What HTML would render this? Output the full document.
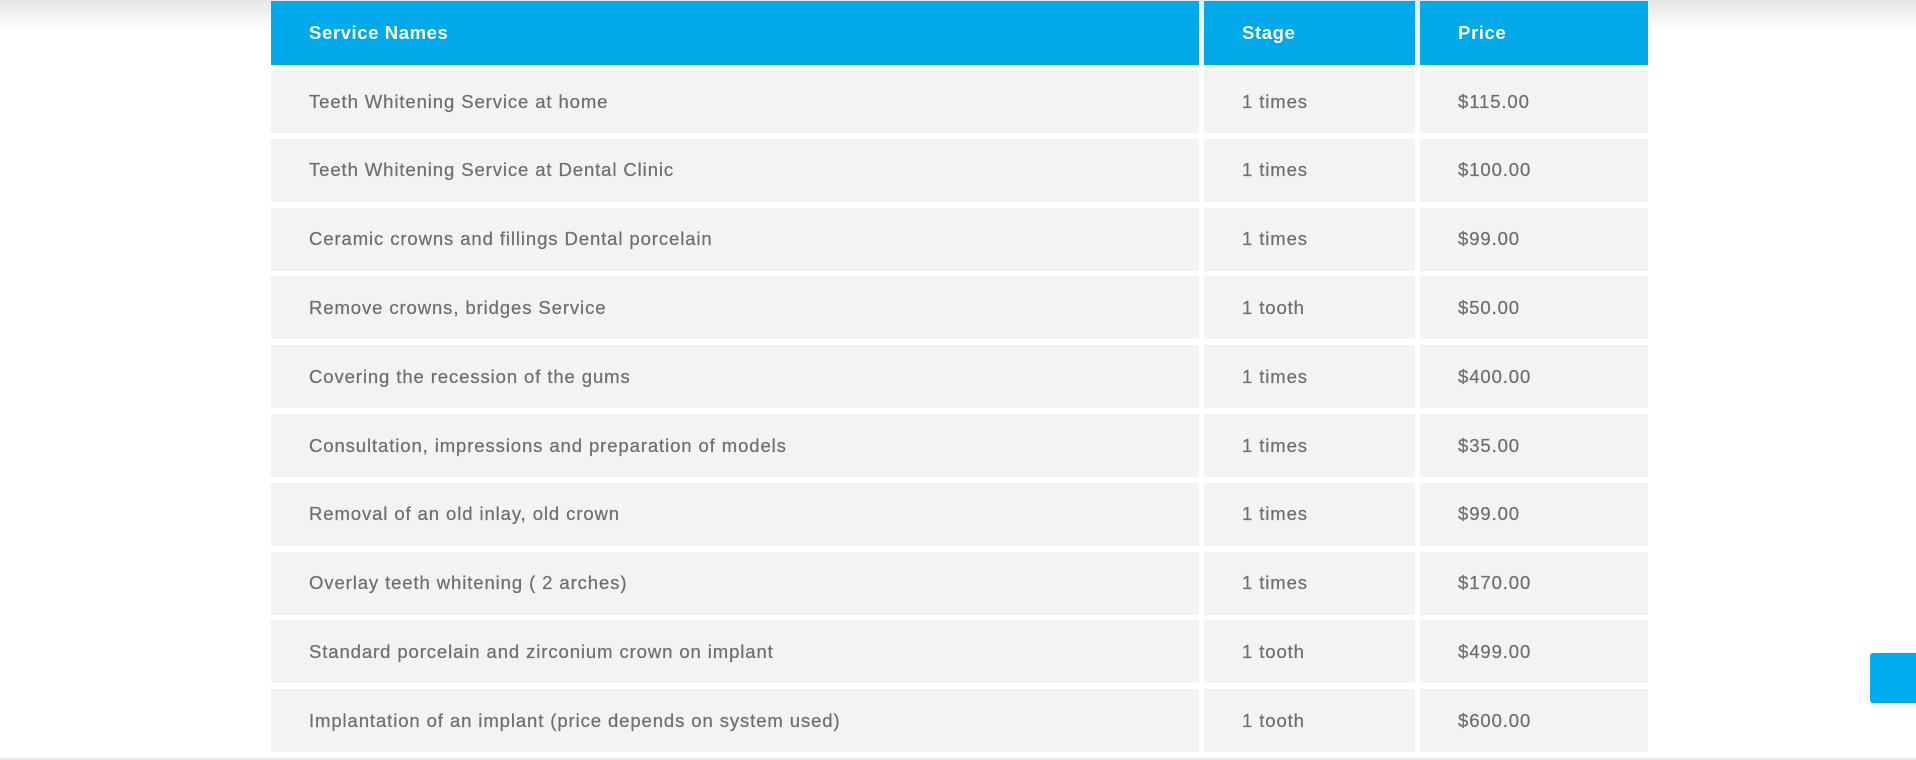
<!DOCTYPE html>
<html><head><style>
body{margin:0;width:1916px;height:760px;background:#fff;position:relative;overflow:hidden;font-family:"Liberation Sans",sans-serif}
.shadow{position:absolute;left:0;top:0;width:1916px;height:30px;background:linear-gradient(#e6e6e6,#fff)}
.c{position:absolute;box-sizing:border-box;padding-left:38px;display:flex;align-items:center;font-size:18.5px;color:#6f6f6f;background:#f3f3f3;letter-spacing:0.9px;-webkit-text-stroke:0.25px #6f6f6f}
.h{background:#00aaea;color:#fff;font-weight:bold;-webkit-text-stroke:0;letter-spacing:0.6px}
.btn{position:absolute;left:1870px;top:653px;width:46px;height:50px;background:#00aeef;border-radius:3px 0 0 3px}
.line{position:absolute;left:0;top:758px;width:1916px;height:2px;background:#e8e8e8}
</style></head><body>
<div class="shadow"></div>
<div id="t"></div>
<div class="btn"></div>
<div class="line"></div>
<script>
var rows=[["Service Names","Stage","Price"],
["Teeth Whitening Service at home","1 times","$115.00"],
["Teeth Whitening Service at Dental Clinic","1 times","$100.00"],
["Ceramic crowns and fillings Dental porcelain","1 times","$99.00"],
["Remove crowns, bridges Service","1 tooth","$50.00"],
["Covering the recession of the gums","1 times","$400.00"],
["Consultation, impressions and preparation of models","1 times","$35.00"],
["Removal of an old inlay, old crown","1 times","$99.00"],
["Overlay teeth whitening ( 2 arches)","1 times","$170.00"],
["Standard porcelain and zirconium crown on implant","1 tooth","$499.00"],
["Implantation of an implant (price depends on system used)","1 tooth","$600.00"]];
var cols=[[271,1199],[1204,1415],[1420,1648]];
var h="";
rows.forEach(function(r,i){
 var top=i==0?1:70+(i-1)*68.8, ht=i==0?64:63;
 r.forEach(function(t,j){
  h+='<div class="c'+(i==0?' h':'')+'" style="left:'+cols[j][0]+'px;width:'+(cols[j][1]-cols[j][0])+'px;top:'+top+'px;height:'+ht+'px">'+t+'</div>';
 });
});
document.getElementById('t').innerHTML=h;
</script>
</body></html>
